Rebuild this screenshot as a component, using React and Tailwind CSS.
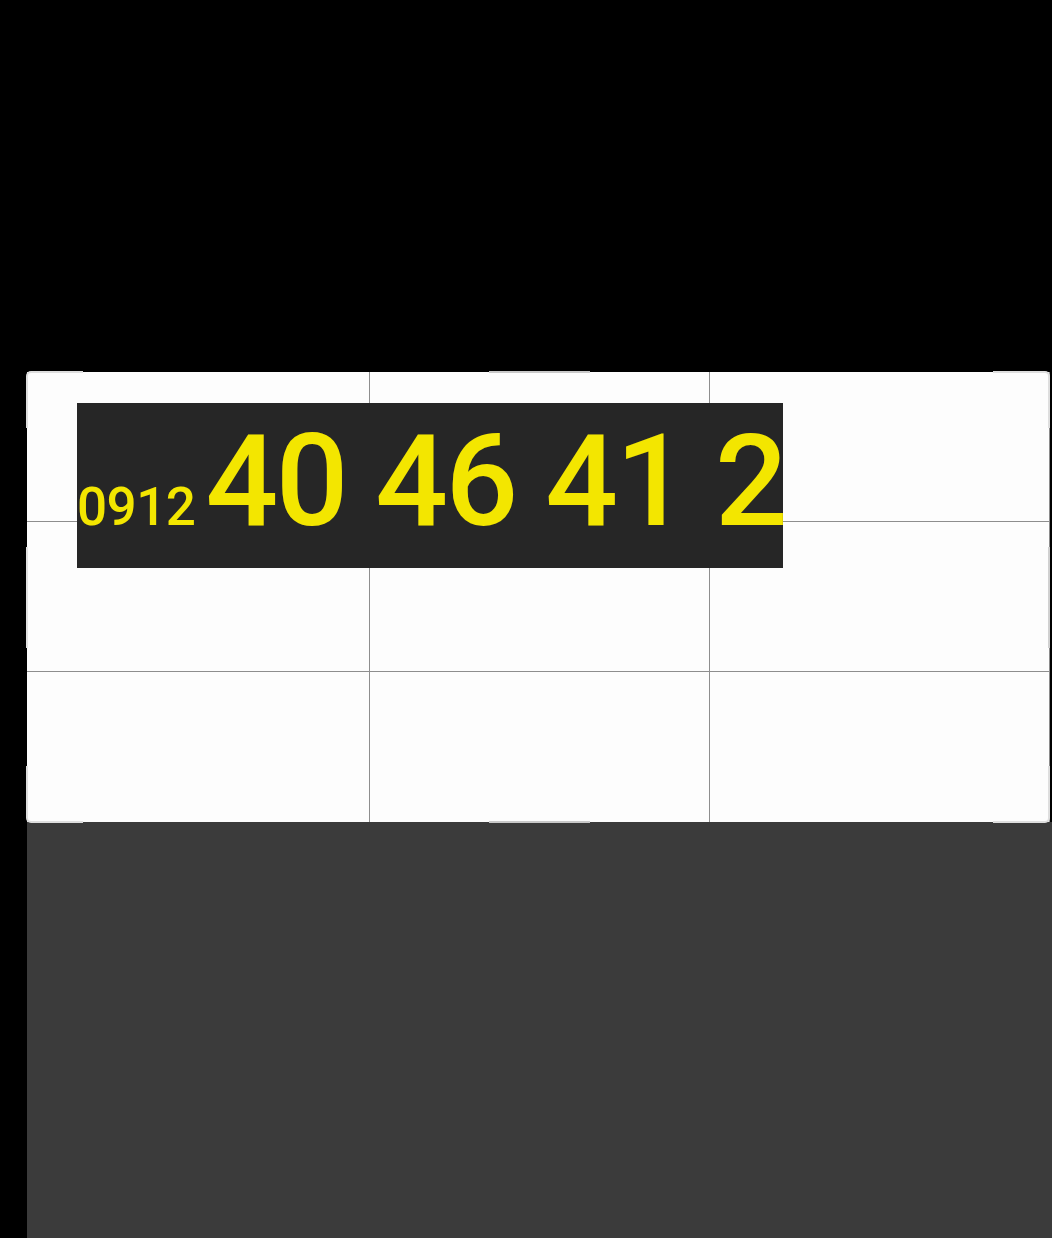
import React from 'react'

const cells = [0, 1, 2, 3, 4, 5, 6, 7, 8]

function CropHandles() {
  return (
    <>
      {/* corners */}
      <div className="absolute -left-[1px] -top-[1px] w-[57px] h-[57px] border-l-2 border-t-2 border-[#dedede] rounded-tl-[5px]" />
      <div className="absolute -right-[1px] -top-[1px] w-[57px] h-[57px] border-r-2 border-t-2 border-[#dedede] rounded-tr-[5px]" />
      <div className="absolute -left-[1px] -bottom-[1px] w-[57px] h-[57px] border-l-2 border-b-2 border-[#dedede] rounded-bl-[5px]" />
      <div className="absolute -right-[1px] -bottom-[1px] w-[57px] h-[57px] border-r-2 border-b-2 border-[#dedede] rounded-br-[5px]" />
      {/* edge middles */}
      <div className="absolute left-[462px] -top-[1px] w-[101px] h-[2px] bg-[#c9c9c9]" />
      <div className="absolute left-[462px] -bottom-[1px] w-[101px] h-[2px] bg-[#c9c9c9]" />
      <div className="absolute -left-[1px] top-[175px] w-[2px] h-[101px] bg-[#e2e2e2]" />
      <div className="absolute -right-[1px] top-[175px] w-[2px] h-[101px] bg-[#d0d0d0]" />
    </>
  )
}

export default function App() {
  return (
    <div className="min-h-[1238px] bg-black flex flex-col" style={{ fontFamily: 'Roboto, "Noto Sans", sans-serif' }}>
      <div className="h-[372px] shrink-0" />
      <div className="flex flex-1 pl-[27px]">
        <div className="flex-1 flex flex-col">
          <div className="relative w-[1023px] h-[450px] bg-[#fdfdfd] border-r border-[#8c8c8c] grid grid-cols-[343px_340px_1fr] grid-rows-3">
            {cells.map((i) => (
              <div
                key={i}
                className={
                  (i % 3 !== 2 ? 'border-r border-[#8e8e8e] ' : '') +
                  (i < 6 ? 'border-b border-[#8e8e8e]' : '')
                }
              />
            ))}

            {/* the number plate lies over the crop grid */}
            <div className="absolute left-[50px] top-[31px] w-[706px] h-[165px] bg-[#262626]">
              <div className="flex items-baseline leading-none pt-[14px] text-[#f3e600] font-medium whitespace-nowrap">
                <span className="text-[53px] tracking-[-0.5px]">0912</span>
                <span className="text-[128px] tracking-[-2.5px] ml-[10px]">40 46 41 2</span>
              </div>
            </div>

            <CropHandles />
          </div>
          <div className="flex-1 bg-[#3b3b3b]" />
        </div>
      </div>
    </div>
  )
}
